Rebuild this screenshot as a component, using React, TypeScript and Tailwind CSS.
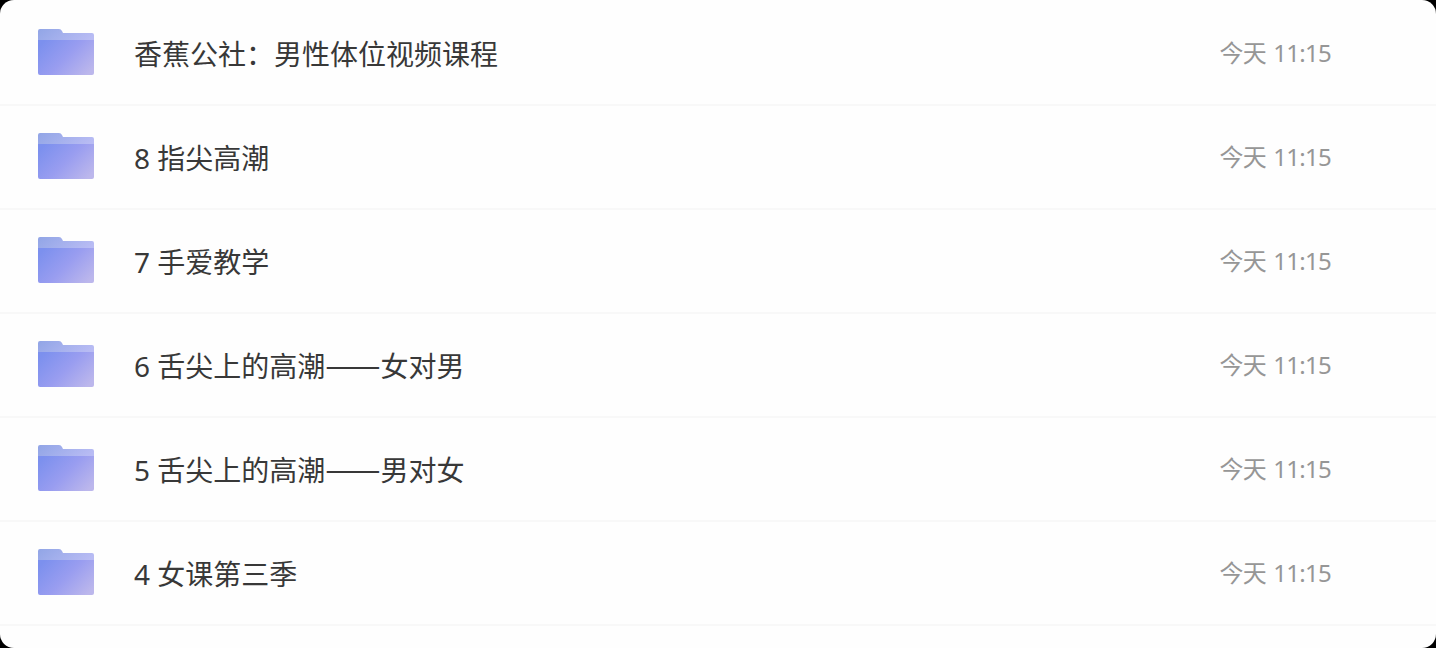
import React from 'react';

interface Folder {
    name: string;
    modified: string;
}

const folders: Folder[] = [
    { name: '香蕉公社：男性体位视频课程', modified: '今天 11:15' },
    { name: '8 指尖高潮', modified: '今天 11:15' },
    { name: '7 手爱教学', modified: '今天 11:15' },
    { name: '6 舌尖上的高潮——女对男', modified: '今天 11:15' },
    { name: '5 舌尖上的高潮——男对女', modified: '今天 11:15' },
    { name: '4 女课第三季', modified: '今天 11:15' },
];

const FolderIcon: React.FC = () => (
    <svg width="56" height="48" viewBox="0 0 56 48" className="mb-0.5 shrink-0">
        <defs>
            <linearGradient id="folderBack" x1="0" y1="0" x2="1" y2="0.4">
                <stop offset="0" stopColor="#91a5e6" />
                <stop offset="1" stopColor="#b9bcf4" />
            </linearGradient>
            <linearGradient id="folderFront" x1="0" y1="0.2" x2="1" y2="0.8">
                <stop offset="0" stopColor="#7c90ee" />
                <stop offset="0.5" stopColor="#999df0" />
                <stop offset="1" stopColor="#bcb7ec" />
            </linearGradient>
        </defs>
        <path d="M0 3Q0 1 2 1H21Q23 1 24 3L25 5H54Q56 5 56 7V20H0Z" fill="url(#folderBack)" />
        <path d="M0 12H56V45Q56 47 54 47H2Q0 47 0 45Z" fill="url(#folderFront)" />
    </svg>
);

// Long dashes use the CJK face so that a pair joins into one line
const FolderName: React.FC<{ name: string }> = ({ name }) => (
    <span className="ml-10 flex-1 pt-0.5 text-[28px] leading-10 text-[#383838]">
        {name.split(/(——)/).map((part, i) =>
            part === '——' ? (
                <span key={i} className="font-['Noto_Sans_CJK_SC',sans-serif] text-[33px] leading-none">{part}</span>
            ) : (
                part
            )
        )}
    </span>
);

const FolderRow: React.FC<{ folder: Folder }> = ({ folder }) => (
    <li className="flex h-[104px] items-center border-b-2 border-[#f8f8f8] pl-[38px] pr-[105px]">
        <FolderIcon />
        <FolderName name={folder.name} />
        <span className="text-2xl tracking-[-0.7px] text-[#969696] [word-spacing:1.5px]">{folder.modified}</span>
    </li>
);

const App: React.FC = () => {
    return (
        <div className="h-screen overflow-hidden bg-black">
            <ul className="h-full overflow-hidden rounded-[14px] bg-[#fefefe] pt-0.5 font-['Noto_Sans','Noto_Sans_CJK_SC',sans-serif]">
                {folders.map((folder) => (
                    <FolderRow key={folder.name} folder={folder} />
                ))}
            </ul>
        </div>
    );
};

export default App;
